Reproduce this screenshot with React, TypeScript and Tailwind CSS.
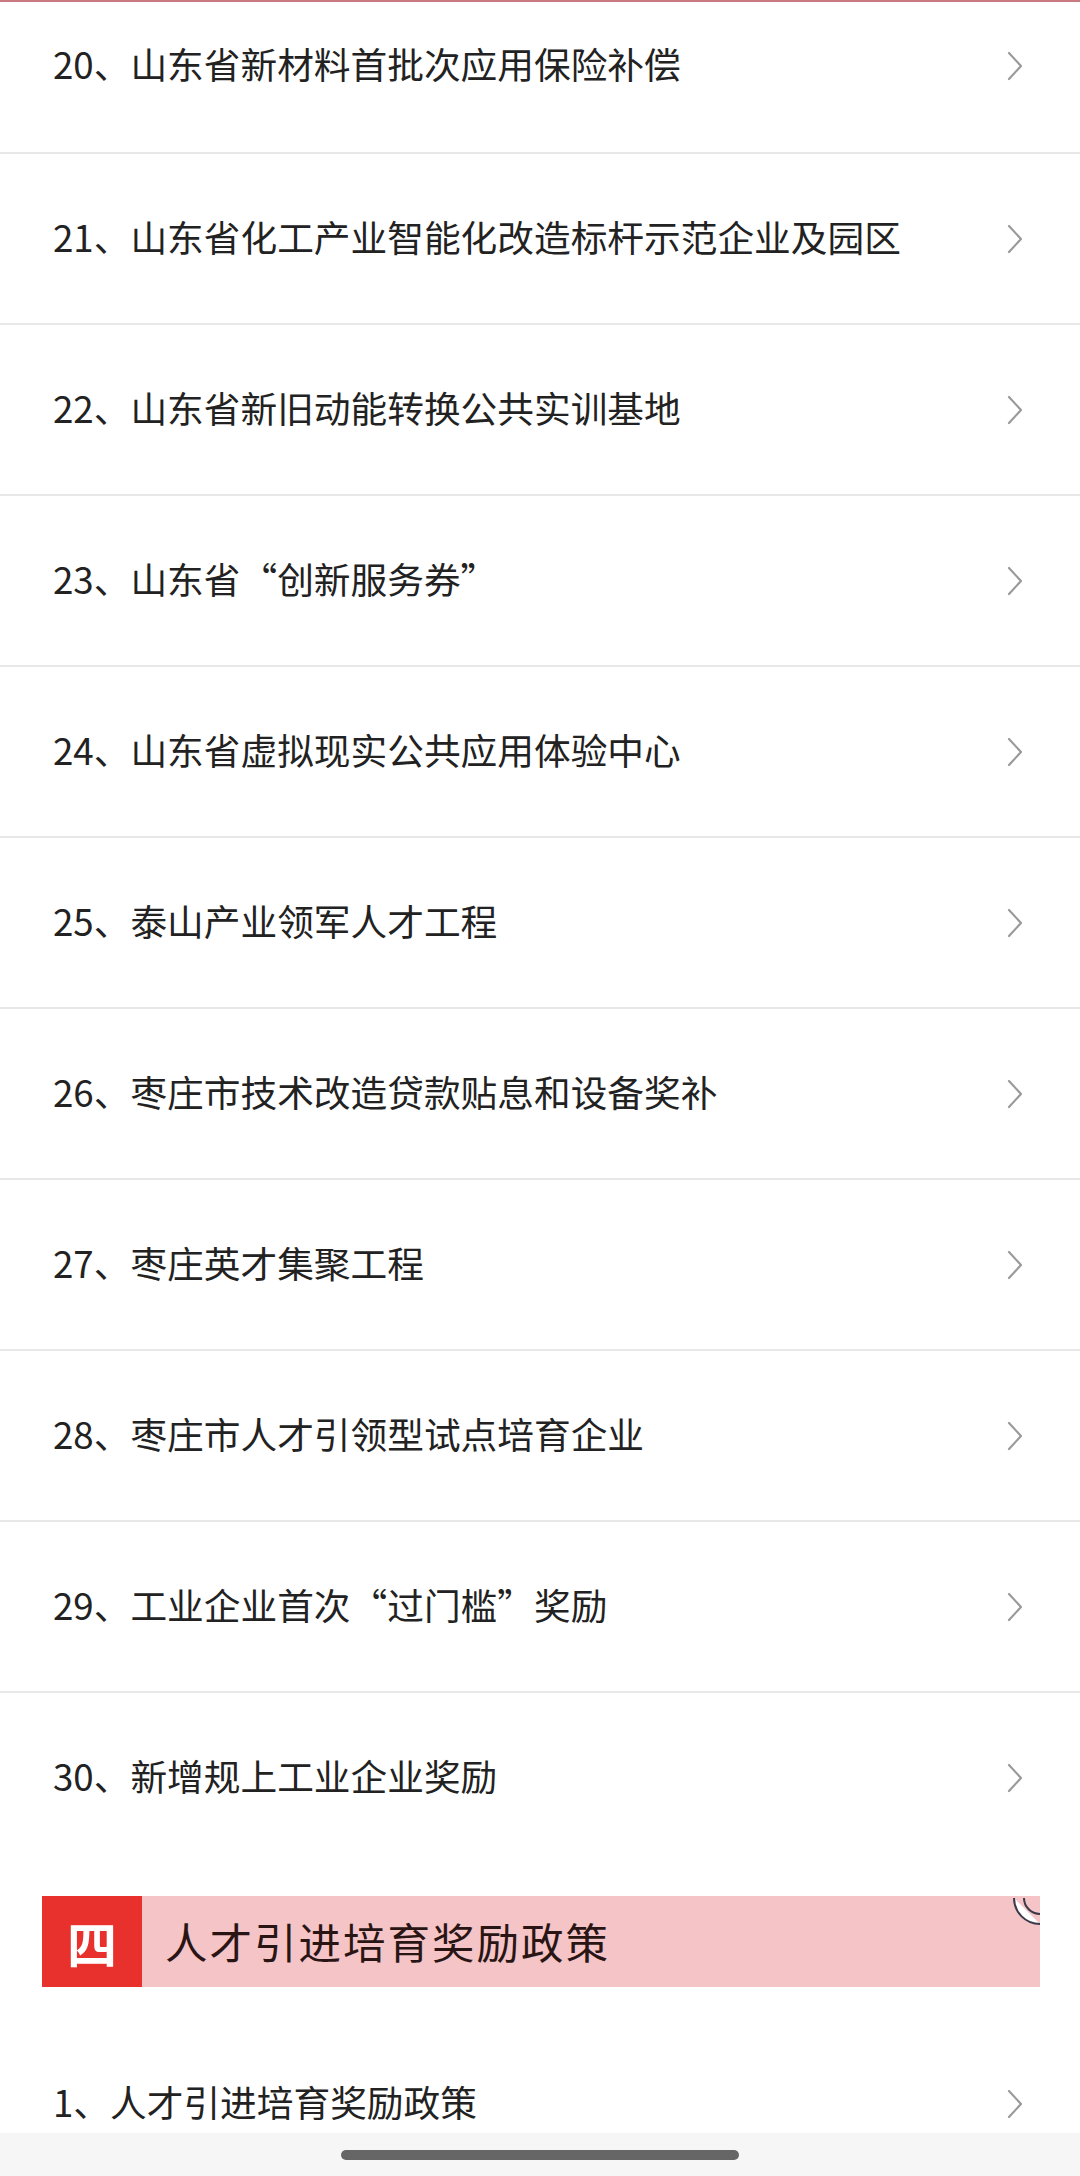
import React from 'react';

const items = [
  '20、山东省新材料首批次应用保险补偿',
  '21、山东省化工产业智能化改造标杆示范企业及园区',
  '22、山东省新旧动能转换公共实训基地',
  '23、山东省“创新服务券”',
  '24、山东省虚拟现实公共应用体验中心',
  '25、泰山产业领军人才工程',
  '26、枣庄市技术改造贷款贴息和设备奖补',
  '27、枣庄英才集聚工程',
  '28、枣庄市人才引领型试点培育企业',
  '29、工业企业首次“过门槛”奖励',
  '30、新增规上工业企业奖励',
];

const font = { fontFamily: '"Noto Sans CJK SC", "Noto Sans", sans-serif' };

function Chevron() {
  return (
    <svg width="18" height="32" viewBox="0 0 18 32" className="shrink-0">
      <path d="M3 3 L15 16 L3 29" fill="none" stroke="#9a9a9a" strokeWidth="2.2" strokeLinecap="round" strokeLinejoin="round" />
    </svg>
  );
}

function Row({ label, first, last }: { label: string; first?: boolean; last?: boolean }) {
  const height = first ? 'h-[152px] pb-[22px]' : last ? 'h-[169px]' : 'h-[171px]';
  return (
    <div
      className={`flex items-center justify-between pl-[53px] pr-[56px] ${height} ${
        last ? '' : 'border-b-2 border-[#e8e8e8]'
      }`}
    >
      <span className="mb-[5px] text-[36.7px] leading-none text-[#222222]">{label}</span>
      <Chevron />
    </div>
  );
}

export default function App() {
  return (
    <div className="relative w-[1080px] h-[2176px] overflow-hidden bg-white" style={font}>
      <div className="h-[2px] bg-[#c97a80]" />

      {items.map((label, i) => (
        <Row key={label} label={label} first={i === 0} last={i === items.length - 1} />
      ))}

      {/* Section header */}
      <div className="relative mx-[42px] mt-[34px] mr-[40px] flex h-[91px] items-center bg-[#f5c4c7]">
        <div className="flex h-full w-[100px] items-center justify-center bg-[#e8302c]">
          <span className="text-[50px] font-bold leading-none text-white">四</span>
        </div>
        <span className="ml-[23px] text-[42.5px] tracking-[2px] leading-none text-[#2a1515]">人才引进培育奖励政策</span>
        <svg className="absolute right-0 top-0" width="30" height="30" viewBox="0 0 30 30">
          <path d="M30 28 A 26 26 0 0 1 4 2" fill="white" stroke="#3a3a4a" strokeWidth="2" />
          <path d="M30 18 A 16 16 0 0 1 14 2" fill="none" stroke="#3a3a4a" strokeWidth="2" />
        </svg>
      </div>

      <div className="mt-[32px]">
        <Row label="1、人才引进培育奖励政策" last />
      </div>

      {/* System navigation bar */}
      <div className="absolute bottom-0 left-0 right-0 flex h-[43px] items-center justify-center bg-[#f6f6f6]">
        <div className="h-[10px] w-[398px] rounded-full bg-[#666666]" />
      </div>
    </div>
  );
}
